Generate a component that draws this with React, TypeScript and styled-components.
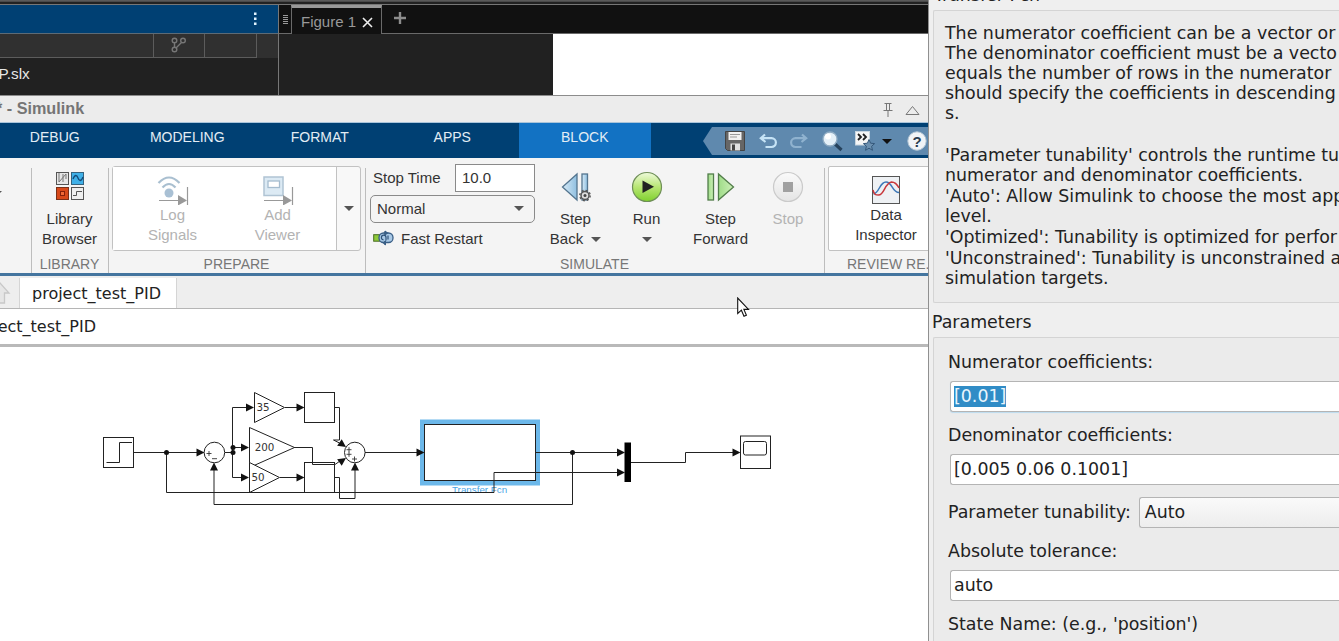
import React from "react";
import styled, { createGlobalStyle } from "styled-components";

const GlobalStyle = createGlobalStyle`
  * { box-sizing: border-box; }
  body {
    margin: 0;
    overflow: hidden;
    background: #fff;
    font-family: "Liberation Sans", Arial, sans-serif;
    font-size: 15px;
    color: #333;
  }
  svg { display: block; flex: none; }
`;

const Screen = styled.div`
  display: flex;
  width: 1339px;
  height: 641px;
  overflow: hidden;
`;

const Desktop = styled.div`
  display: flex;
  flex-direction: column;
  width: 928px;
  flex: none;
  overflow: hidden;
`;

/* MATLAB desktop */

const TopEdge = styled.div`
  height: 5px;
  flex: none;
  background: linear-gradient(#5a5a5a 0 1px, #4a4a4a 1px 2px, #222 2px 4px, #777 4px 5px);
`;

const DesktopBody = styled.div`
  display: flex;
  height: 90px;
  flex: none;
`;

const FilesPanel = styled.div`
  width: 279px;
  border-right: 1px solid #777;
  background: #212121;
`;

const PanelHeader = styled.div`
  display: flex;
  justify-content: flex-end;
  height: 29px;
  padding: 6px 20px 0 0;
  background: #004073;
  border-bottom: 1px solid #5d6b76;
`;

const ColumnHeads = styled.div`
  display: flex;
  height: 24px;
  background: #303030;
`;

const ColumnHead = styled.div<{ $w: number }>`
  display: flex;
  align-items: center;
  justify-content: center;
  width: ${(p) => p.$w}px;
  border-right: 1px solid #5c5c5c;
  border-bottom: 1px solid #5c5c5c;
`;

const FileName = styled.div`
  margin: 7px 0 0 -1.5px;
  line-height: 18px;
  font-size: 15.3px;
  color: #e6e6e6;
`;

const FigurePanel = styled.div`
  flex: 1;
  display: flex;
  flex-direction: column;
`;

const FigureTabs = styled.div`
  display: flex;
  height: 29px;
  flex: none;
  background: #111;
`;

const Grip = styled.div`
  display: flex;
  flex-direction: column;
  align-items: center;
  gap: 1px;
  width: 12px;
  padding-top: 10px;
  border-bottom: 1px solid #6a6a6a;
  span { width: 5px; height: 1px; background: #999; }
`;

const FigureTab = styled.div`
  display: flex;
  align-items: center;
  gap: 6px;
  width: 91px;
  padding: 0 0 0 9px;
  border: 1px solid #6a6a6a;
  border-top: 3px solid #999;
  border-bottom: 0;
  color: #999;
  white-space: nowrap;
  svg { margin-top: 2px; }
`;

const TabFill = styled.div`
  flex: 1;
  padding: 7px 0 0 12px;
  border-bottom: 1px solid #6a6a6a;
`;

const FigureBody = styled.div`
  display: flex;
  flex: 1;
  background: linear-gradient(90deg, #212121 274px, #fff 274px);
`;

/* Simulink window */

const TitleBar = styled.div`
  display: flex;
  align-items: center;
  height: 28px;
  flex: none;
  padding: 0 8px 1px 0;
  border-top: 1px solid #8c8c8c;
  border-bottom: 1px solid #a9c4da;
  background: #ececec;
`;

const Title = styled.div`
  flex: 1;
  margin-left: -4px;
  font-weight: bold;
  font-size: 16.2px;
  white-space: pre;
  color: #757575;
`;

const TitleIcons = styled.div`
  display: flex;
  align-items: center;
  gap: 12px;
  padding-top: 3px;
`;

const RibbonTabs = styled.div`
  display: flex;
  height: 35px;
  flex: none;
  background: #004073;
`;

const TabRun = styled.div`
  display: flex;
  justify-content: flex-end;
  width: 651px;
  overflow: hidden;
`;

const RibbonTab = styled.div<{ $active?: boolean }>`
  flex: none;
  width: 132.5px;
  padding-top: 6px;
  line-height: 17px;
  font-size: 14px;
  text-align: center;
  color: #e3edf5;
  background: ${(p) => (p.$active ? "#1272c3" : "transparent")};
`;

const QuickAccess = styled.div`
  display: flex;
  align-items: center;
  height: 28px;
  flex: 1;
  margin: 4px 0 0 52px;
  padding-left: 22px;
  background: #5f89ae;
  clip-path: polygon(0 50%, 9px 0, 100% 0, 100% 100%, 9px 100%);
`;

const QuickSlot = styled.div<{ $w: number; $drop?: number }>`
  display: flex;
  flex: none;
  width: ${(p) => p.$w}px;
  padding-top: ${(p) => p.$drop ?? 0}px;
`;

const Ribbon = styled.div`
  display: flex;
  height: 115px;
  flex: none;
  background: #f4f4f4;
`;

const Section = styled.div<{ $w: number }>`
  display: flex;
  flex-direction: column;
  flex: none;
  width: ${(p) => p.$w}px;
  background: linear-gradient(#bdbdbd, #bdbdbd) right 10px / 1px 105px no-repeat;
`;

const SectionBody = styled.div<{ $pad?: string }>`
  display: flex;
  height: 97px;
  flex: none;
  padding: ${(p) => p.$pad ?? "0"};
`;

const Caption = styled.div<{ $left?: number }>`
  line-height: 19px;
  font-size: 14px;
  padding-left: ${(p) => p.$left ?? 0}px;
  padding-right: ${(p) => (p.$left ? 0 : 2)}px;
  text-align: ${(p) => (p.$left ? "left" : "center")};
  white-space: nowrap;
  color: #777;
`;

const EdgeCaret = styled.div`
  margin: 33px 0 0 -6px;
`;

const ToolButton = styled.div<{ $w: number; $dim?: boolean; $gap?: number }>`
  display: flex;
  flex-direction: column;
  align-items: center;
  gap: ${(p) => p.$gap ?? 6}px;
  width: ${(p) => p.$w}px;
  flex: none;
  line-height: 20px;
  text-align: center;
  color: ${(p) => (p.$dim ? "#b3b3b3" : "#333")};
`;

const LabelRow = styled.div`
  display: flex;
  align-items: center;
  justify-content: center;
  gap: 8px;
  height: 20px;
  white-space: nowrap;
`;

const Gallery = styled.div`
  display: flex;
  width: 249px;
  height: 85px;
  border: 1px solid #c2c2c2;
  border-radius: 3px;
  background: #f8f8f8;
`;

const GalleryItems = styled.div<{ $w: number }>`
  display: flex;
  width: ${(p) => p.$w}px;
  padding: 6px 0 0 7px;
  border-right: 1px solid #c2c2c2;
  background: #fff;
`;

const GalleryMore = styled.div`
  display: flex;
  flex: 1;
  align-items: center;
  justify-content: center;
`;

const Settings = styled.div`
  width: 165px;
  flex: none;
`;

const StopTime = styled.div`
  display: flex;
  justify-content: space-between;
  height: 28px;
  padding-left: 3px;
  line-height: 27px;
`;

const TimeField = styled.div`
  width: 80px;
  height: 28px;
  padding: 0 6px;
  line-height: 26px;
  border: 1px solid #8a8a8a;
  background: #fff;
`;

const ModeSelect = styled.div`
  display: flex;
  align-items: center;
  justify-content: space-between;
  height: 28px;
  margin-top: 3px;
  padding: 0 10px 1px 6px;
  border: 1px solid #8a8a8a;
  border-radius: 5px;
`;

const FastRestart = styled.div`
  display: flex;
  align-items: center;
  gap: 7px;
  height: 20px;
  margin-top: 5px;
  padding-left: 3px;
`;

const InspectorPanel = styled.div`
  width: 117px;
  height: 85px;
  flex: none;
  padding-top: 6px;
  border: 1px solid #c2c2c2;
  border-radius: 2px;
  background: #fff;
`;

const RibbonEdge = styled.div`
  height: 3px;
  flex: none;
  background: #44759f;
`;

const DocTabs = styled.div`
  display: flex;
  height: 33px;
  flex: none;
  background: #eee;
  border-bottom: 1px solid #b5b5b5;
`;

const UpArrow = styled.div`
  width: 19px;
  padding-top: 3px;
  overflow: hidden;
`;

const DocTab = styled.div`
  width: 158px;
  margin-top: 2px;
  padding-left: 12px;
  line-height: 31px;
  font-family: "DejaVu Sans", sans-serif;
  font-size: 16px;
  color: #222;
  border: 1px solid #d5d5d5;
  border-top: 0;
  border-bottom: 0;
  background: #fff;
`;

const PathBar = styled.div`
  display: flex;
  height: 38px;
  flex: none;
  line-height: 35px;
  font-family: "DejaVu Sans", sans-serif;
  font-size: 16px;
  color: #222;
  border-bottom: 3px solid #b9b9b9;
  background: #fff;
`;

const PathText = styled.div`
  width: 96px;
  display: flex;
  justify-content: flex-end;
  overflow: hidden;
`;

const Canvas = styled.div`
  height: 294px;
  background: #fff;
`;

const Pointer = styled.div`
  position: absolute;
  left: 737px;
  top: 297px;
`;

/* Block parameters dialog */

const Dialog = styled.div`
  display: flex;
  flex-direction: column;
  width: 411px;
  flex: none;
  height: 641px;
  overflow: hidden;
  border-left: 1px solid #909090;
  background: #efefef;
  font-family: "DejaVu Sans", sans-serif;
  font-size: 17.4px;
  line-height: 20px;
  color: #222;
  white-space: nowrap;
`;

const Heading = styled.div<{ $h: number; $top: number; $left: number }>`
  height: ${(p) => p.$h}px;
  flex: none;
  display: flex;
  padding-left: ${(p) => p.$left}px;
  div { margin-top: ${(p) => p.$top}px; }
`;

const Frame = styled.div<{ $h: number; $pad: string }>`
  height: ${(p) => p.$h}px;
  flex: none;
  margin-left: 4px;
  padding: ${(p) => p.$pad};
  border: 1px solid #d4d4d4;
  border-right: 0;
  border-radius: 2px 0 0 2px;
  background: #ebebeb;
  overflow: hidden;
`;

const Para = styled.div<{ $after?: number }>`
  margin-bottom: ${(p) => p.$after ?? 1}px;
`;

const FieldLabel = styled.div`
  height: 20px;
`;

const Field = styled.div<{ $focus?: boolean; $after?: number }>`
  display: flex;
  align-items: center;
  height: 31px;
  margin: 9px 0 ${(p) => p.$after ?? 13}px 2px;
  padding: 0 0 ${(p) => (p.$focus ? 0 : 2)}px 3px;
  border: 1px solid #b4b4b4;
  border-right: 0;
  border-radius: 3px 0 0 3px;
  background: #fff;
  box-shadow: ${(p) => (p.$focus ? "0 1px 1px #bcdcf0" : "none")};
`;

const Selected = styled.span`
  height: 21px;
  line-height: 20px;
  background: #308cc6;
  color: #e9f5fd;
`;

const ComboRow = styled.div`
  display: flex;
  gap: 8px;
  height: 31px;
  margin-bottom: 13px;
  line-height: 30px;
`;

const Combo = styled.div`
  flex: 1;
  height: 31px;
  padding-left: 5px;
  line-height: 28px;
  border: 1px solid #b4b4b4;
  border-right: 0;
  border-radius: 3px 0 0 3px;
  background: linear-gradient(#fafafa, #ededed);
`;

const Caret = ({ color = "#555", w = 10 }: { color?: string; w?: number }) => (
  <svg width={w} height={w / 2} viewBox="0 0 10 5"><path d="M0 0h10L5 5z" fill={color} /></svg>
);

const LibraryIcon = () => (
  <svg width="32" height="32" viewBox="0 0 32 32">
    <rect x="2.5" y="1.5" width="12" height="12" fill="#e6e6e6" stroke="#555" />
    <path d="M5 2v9M9 3v8M5 11l7-8M12 3v5" stroke="#777" fill="none" />
    <rect x="17.5" y="1.5" width="12" height="12" fill="#3fb0e8" stroke="#35637f" />
    <path d="M19 8c2-5 4-4 5-1s3 4 5-1" stroke="#124a78" fill="none" strokeWidth="1.3" />
    <rect x="2.5" y="16.5" width="12" height="12" fill="#d8491a" stroke="#7a3018" />
    <rect x="6.5" y="20.5" width="4" height="4" fill="#f06a38" stroke="#85200a" />
    <rect x="17.5" y="16.5" width="12" height="12" fill="#efefef" stroke="#555" />
    <path d="M19 24.5h3.5v-4H28" stroke="#555" fill="none" />
  </svg>
);

const SignalArrow = () => (
  <g stroke="#999" fill="#999">
    <path d="M2 27.500h26M30.500 14v18" fill="none" strokeWidth="1.200" />
    <path d="M21 22v10.500l9-5z" stroke="none" />
  </g>
);

const LogIcon = () => (
  <svg width="32" height="32" viewBox="0 0 32 32">
    <g fill="none" stroke="#a9bfd0" strokeWidth="2.200">
      <path d="M1.500 10Q12 -1 22.500 10" />
      <path d="M5.500 14.500Q12 7.500 18.500 14.500" />
    </g>
    <circle cx="12" cy="20" r="4.500" fill="#a9c0d4" />
    <SignalArrow />
  </svg>
);

const ViewerIcon = () => (
  <svg width="32" height="32" viewBox="0 0 32 32">
    <rect x="2" y="4" width="19" height="18.500" fill="#dceaf4" stroke="#b0c4d4" strokeWidth="1.500" />
    <rect x="6" y="8" width="11.500" height="6.500" fill="#fff" stroke="#a5bccf" strokeWidth="1.300" />
    <SignalArrow />
  </svg>
);

const StepBackIcon = () => (
  <svg width="32" height="32" viewBox="0 0 32 32">
    <defs>
      <linearGradient id="sb" x1="0" x2="1"><stop offset="0" stopColor="#d8ebf7" /><stop offset="1" stopColor="#8fbfe0" /></linearGradient>
    </defs>
    <path d="M17 3v26L2.500 16z" fill="url(#sb)" stroke="#54758f" strokeWidth="1.300" />
    <rect x="22" y="3" width="5.500" height="26" fill="url(#sb)" stroke="#54758f" strokeWidth="1.300" />
    <circle cx="25" cy="24.500" r="4" fill="#ddd" stroke="#555" strokeWidth="1.500" />
    <circle cx="25" cy="24.500" r="5.200" fill="none" stroke="#555" strokeWidth="1.400" strokeDasharray="2 2.080" />
    <circle cx="25" cy="24.500" r="1.500" fill="#444" />
  </svg>
);

const RunIcon = () => (
  <svg width="32" height="32" viewBox="0 0 32 32">
    <defs>
      <linearGradient id="rn" x1="0" x2="0" y1="0" y2="1"><stop offset="0" stopColor="#eefadb" /><stop offset="0.500" stopColor="#b8e674" /><stop offset="1" stopColor="#7fd02e" /></linearGradient>
    </defs>
    <circle cx="16" cy="16" r="14.500" fill="url(#rn)" stroke="#6f8f58" strokeWidth="1.200" />
    <path d="M11.500 9.500v12.500l11.500-6.250z" fill="#222" />
  </svg>
);

const StepForwardIcon = () => (
  <svg width="32" height="32" viewBox="0 0 32 32">
    <defs>
      <linearGradient id="sf" x1="0" x2="1"><stop offset="0" stopColor="#9fdc88" /><stop offset="1" stopColor="#cdf0b8" /></linearGradient>
    </defs>
    <rect x="3" y="3" width="5.500" height="26" fill="url(#sf)" stroke="#527d4a" strokeWidth="1.300" />
    <path d="M13.500 3v26L28.500 16z" fill="url(#sf)" stroke="#527d4a" strokeWidth="1.300" />
  </svg>
);

const StopIcon = () => (
  <svg width="32" height="32" viewBox="0 0 32 32">
    <defs>
      <linearGradient id="st" x1="0" x2="0" y1="0" y2="1"><stop offset="0" stopColor="#fafafa" /><stop offset="1" stopColor="#e4e4e4" /></linearGradient>
    </defs>
    <circle cx="16" cy="16" r="14.500" fill="url(#st)" stroke="#cacaca" strokeWidth="1.200" />
    <rect x="11" y="11" width="10" height="10" fill="#a0a0a0" />
  </svg>
);

const InspectorIcon = () => (
  <svg width="32" height="32" viewBox="0 0 32 32">
    <rect x="2.500" y="3.500" width="27" height="27" fill="#eef1f4" stroke="#555" />
    <path d="M3.500 21c6-1 6-12 12.500-12s6 10.500 13 10.500" fill="none" stroke="#3e78b8" strokeWidth="1.500" />
    <path d="M3 17c1 5 3 5 5.500 5 6 0 6-12 13-13 4 0 6 3 7.500 6" fill="none" stroke="#c8383c" strokeWidth="1.500" />
  </svg>
);

const RestartIcon = () => (
  <svg width="21" height="16" viewBox="0 0 21 16">
    <rect x="0.700" y="4.700" width="6" height="6.500" fill="#8fcb3a" stroke="#486c20" />
    <rect x="6" y="3" width="14" height="9.500" rx="4.500" fill="#a9c9e6" stroke="#3a5f86" strokeWidth="1.300" />
    <path d="M10.500 9.800a2.300 2.300 0 1 1 2.500-2.300v3M15 5.500v4M12 1v4M12 11v4" fill="none" stroke="#2f5378" strokeWidth="1.200" />
    <path d="M12 0.500l3.500 2.500L12 5.500zM13 10v5.500L9.500 13z" fill="#3a5f86" />
  </svg>
);

const SaveIcon = () => (
  <svg width="20" height="20" viewBox="0 0 20 20">
    <path d="M0.500 0.500h19v19h-17l-2-2z" fill="#666" stroke="#444" />
    <rect x="3.500" y="1" width="13" height="8" fill="#f2f2f2" />
    <path d="M5 3.500h10M5 6h7" stroke="#999" />
    <rect x="5.500" y="12.500" width="9.500" height="7" fill="#e0e0e0" />
    <rect x="7" y="13.500" width="3" height="6" fill="#444" />
  </svg>
);

const UndoIcon = ({ flip }: { flip?: boolean }) => (
  <svg width="18" height="18" viewBox="0 0 18 18">
    <g transform={flip ? "translate(18 0) scale(-1 1)" : undefined} fill="none" stroke={flip ? "#8fb2cf" : "#c5e3f6"} strokeWidth="2.200">
      <path d="M6 1.500L1.800 5.200L6.500 9M2 5.200h10.500a3.900 3.900 0 0 1 0 8.800H6.500" />
    </g>
  </svg>
);

const SearchIcon = () => (
  <svg width="21" height="21" viewBox="0 0 21 21">
    <path d="M12 12l7.500 7" stroke="#26425c" strokeWidth="3.200" />
    <circle cx="8" cy="8" r="7" fill="#e4f0f8" stroke="#8eabc3" strokeWidth="1.300" />
    <circle cx="6" cy="5.500" r="3" fill="#fff" />
  </svg>
);

const FavoritesIcon = () => (
  <svg width="21" height="20" viewBox="0 0 21 20">
    <rect x="0.500" y="0.500" width="14" height="13.500" fill="#f6f6f6" stroke="#c9d6e0" />
    <path d="M3 3l3 3l-3 3M8 3l3 3l-3 3" fill="none" stroke="#222" strokeWidth="1.800" />
    <path d="M14 8.500l1.600 3.700 4 .4-3 2.700.9 4-3.500-2.100-3.500 2.100.9-4-3-2.700 4-.4z" fill="#6c90b0" stroke="#35587a" />
  </svg>
);

const HelpIcon = () => (
  <svg width="20" height="20" viewBox="0 0 20 20">
    <circle cx="10" cy="10" r="9.200" fill="#f1f4f7" stroke="#b5c6d4" />
    <text x="10" y="15.500" textAnchor="middle" fontFamily="Liberation Sans" fontWeight="bold" fontSize="15" fill="#2b3d50">?</text>
  </svg>
);

type Pt = [number, number];

const SignalHead = ({ at, turn = 0 }: { at: Pt; turn?: number }) => (
  <path d="M0 0L-8 -4V4z" fill="#111" transform={`translate(${at[0]} ${at[1]}) rotate(${turn})`} />
);

const Diagram = () => (
  <svg width="928" height="294" viewBox="0 347 928 294" fontFamily="DejaVu Sans">
    <rect x="422.500" y="422" width="115" height="61" fill="#fff" stroke="#6cb8ea" strokeWidth="5" />
    <text x="452" y="493" fontFamily="Liberation Sans" fontSize="9.800" fill="#4aa6e6">Transfer Fcn</text>
    <g fill="#fff" stroke="#222">
      <rect x="103.500" y="437.500" width="30" height="30" />
      <path d="M106.500 462.500h13v-20h12.500" fill="none" />
      <circle cx="214.400" cy="452.500" r="10.300" />
      <path d="M254.500 392.500v30l30-15z" />
      <path d="M249.500 427.500v40l45-20z" />
      <path d="M249.500 462.500v30l30-15z" />
      <rect x="304.500" y="392.500" width="30" height="30" />
      <rect x="304.500" y="462.500" width="30" height="30" />
      <circle cx="354.800" cy="452.500" r="10.300" />
      <rect x="424.500" y="424.500" width="111" height="56" />
      <rect x="740.500" y="436" width="30" height="32.500" />
      <rect x="743.500" y="441.500" width="23" height="13.500" rx="2" />
    </g>
    <g fill="none" stroke="#222">
      <path d="M134 452.500h66M166.500 452.500v40h327.500v-20h126" />
      <path d="M225 452.500h8M248 407.500h-15.500v70h12M233 447.500h10M240 407.500h8" />
      <path d="M285 407.500h14M280 477.500h18" />
      <path d="M335 407.500h4.500v32.500h-6l6 3" />
      <path d="M294 447.500h18.500v17h22.500l5-3.500" />
      <path d="M335 477.500h4.500v21h15.500v-32" />
      <path d="M365 452.500h53M536 452.500h83" />
      <path d="M572.500 452.500v52h-358.500v-38" />
      <path d="M631 462.500h54.500v-10h50" />
    </g>
    <rect x="624.500" y="442.500" width="6.500" height="39.500" fill="#000" />
    <SignalHead at={[204.500, 452.500]} />
    <SignalHead at={[254, 407.500]} />
    <SignalHead at={[249, 447.500]} />
    <SignalHead at={[249, 477.500]} />
    <SignalHead at={[304.500, 407.500]} />
    <SignalHead at={[304.500, 477.500]} />
    <SignalHead at={[346, 447]} turn={35} />
    <SignalHead at={[346, 458]} turn={-35} />
    <SignalHead at={[355, 462.500]} turn={-90} />
    <SignalHead at={[214, 462.500]} turn={-90} />
    <SignalHead at={[424.500, 452.500]} />
    <SignalHead at={[625, 452.500]} />
    <SignalHead at={[625, 472.500]} />
    <SignalHead at={[740.500, 452.500]} />
    <circle cx="166.500" cy="452.500" r="2.500" fill="#111" />
    <circle cx="233" cy="447.500" r="2.500" fill="#111" />
    <circle cx="233" cy="452.500" r="2.500" fill="#111" />
    <circle cx="572.500" cy="452.500" r="2.500" fill="#111" />
    <g stroke="#333" strokeWidth="0.900">
      <path d="M206.500 453.500h5M209 451v5M212 458.700h5" />
      <path d="M346.500 449.700h5M349 447.200v5M346.500 454.300h5M349 451.800v5M352 459h5M354.500 456.500v5" />
    </g>
    <g fontSize="10.300" fill="#333">
      <text x="256.500" y="411">35</text>
      <text x="254.700" y="451">200</text>
      <text x="251.500" y="481">50</text>
    </g>
  </svg>
);

export default function App() {
  return (
    <Screen>
      <GlobalStyle />
      <Desktop>
        <TopEdge />
        <DesktopBody>
          <FilesPanel>
            <PanelHeader>
              <svg width="6" height="16" viewBox="0 0 6 16" fill="#dff3ff">
                <rect x="2" y="1.500" width="2.500" height="2.500" /><rect x="2" y="6.500" width="2.500" height="2.500" /><rect x="2" y="11.500" width="2.500" height="2.500" />
              </svg>
            </PanelHeader>
            <ColumnHeads>
              <ColumnHead $w={154} />
              <ColumnHead $w={51}>
                <svg width="16" height="17" viewBox="0 0 16 17" fill="none" stroke="#777" strokeWidth="1.400">
                  <circle cx="3.500" cy="3.500" r="2.300" /><circle cx="12" cy="3.500" r="2.300" /><circle cx="3.500" cy="12.500" r="2.300" />
                  <path d="M3.500 6v4M10.500 5.500L5 11" />
                </svg>
              </ColumnHead>
              <ColumnHead $w={52} />
            </ColumnHeads>
            <FileName>P.slx</FileName>
          </FilesPanel>
          <FigurePanel>
            <FigureTabs>
              <Grip><span /><span /><span /><span /><span /></Grip>
              <FigureTab>
                Figure 1
                <svg width="11" height="11" viewBox="0 0 11 11"><path d="M1 1l9 9M10 1l-9 9" stroke="#eee" strokeWidth="1.600" /></svg>
              </FigureTab>
              <TabFill>
                <svg width="12" height="12" viewBox="0 0 12 12"><path d="M6 0v12M0 6h12" stroke="#8c8c8c" strokeWidth="2.400" /></svg>
              </TabFill>
            </FigureTabs>
            <FigureBody />
          </FigurePanel>
        </DesktopBody>

        <TitleBar>
          <Title>* - Simulink</Title>
          <TitleIcons>
            <svg width="10" height="14" viewBox="0 0 10 14" fill="none" stroke="#777"><path d="M1.500 0.500h7M3.500 0.500v7M6.500 0.500v7M0.500 7.500h9M5 7.500V14" /></svg>
            <svg width="15" height="11" viewBox="0 0 15 11" fill="none" stroke="#777"><path d="M1 9.500h13L7.500 1.500z" /></svg>
          </TitleIcons>
        </TitleBar>

        <RibbonTabs>
          <TabRun>
            <RibbonTab>DEBUG</RibbonTab>
            <RibbonTab>MODELING</RibbonTab>
            <RibbonTab>FORMAT</RibbonTab>
            <RibbonTab>APPS</RibbonTab>
            <RibbonTab $active>BLOCK</RibbonTab>
          </TabRun>
          <QuickAccess>
            <QuickSlot $w={34}><SaveIcon /></QuickSlot>
            <QuickSlot $w={31} $drop={2}><UndoIcon /></QuickSlot>
            <QuickSlot $w={32} $drop={2}><UndoIcon flip /></QuickSlot>
            <QuickSlot $w={33}><SearchIcon /></QuickSlot>
            <QuickSlot $w={27}><FavoritesIcon /></QuickSlot>
            <QuickSlot $w={25}><Caret color="#111" /></QuickSlot>
            <HelpIcon />
          </QuickAccess>
        </RibbonTabs>

        <Ribbon>
          <Section $w={32}><EdgeCaret><Caret w={8} /></EdgeCaret></Section>
          <Section $w={77}>
            <SectionBody $pad="13px 0 0 0">
              <ToolButton $w={75}>
                <LibraryIcon />
                <div>Library<br />Browser</div>
              </ToolButton>
            </SectionBody>
            <Caption>LIBRARY</Caption>
          </Section>
          <Section $w={257}>
            <SectionBody $pad="8px 0 0 3px">
              <Gallery>
                <GalleryItems $w={224}>
                  <ToolButton $w={105} $dim $gap={-1}><LogIcon /><div>Log<br />Signals</div></ToolButton>
                  <ToolButton $w={105} $dim $gap={-1}><ViewerIcon /><div>Add<br />Viewer</div></ToolButton>
                </GalleryItems>
                <GalleryMore><Caret /></GalleryMore>
              </Gallery>
            </SectionBody>
            <Caption>PREPARE</Caption>
          </Section>
          <Section $w={459}>
            <SectionBody $pad="6px 0 0 4px">
              <Settings>
                <StopTime>Stop Time<TimeField>10.0</TimeField></StopTime>
                <ModeSelect>Normal<Caret /></ModeSelect>
                <FastRestart><RestartIcon />Fast Restart</FastRestart>
              </Settings>
              <SectionBody $pad="7px 0 0 5px">
                <ToolButton $w={71}>
                  <StepBackIcon />
                  <div>Step<LabelRow>Back <Caret /></LabelRow></div>
                </ToolButton>
                <ToolButton $w={71}>
                  <RunIcon />
                  <div>Run<LabelRow><Caret /></LabelRow></div>
                </ToolButton>
                <ToolButton $w={77}>
                  <StepForwardIcon />
                  <div>Step<br />Forward</div>
                </ToolButton>
                <ToolButton $w={58} $dim>
                  <StopIcon />
                  <div>Stop</div>
                </ToolButton>
              </SectionBody>
            </SectionBody>
            <Caption>SIMULATE</Caption>
          </Section>
          <Section $w={126}>
            <SectionBody $pad="8px 0 0 3px">
              <InspectorPanel>
                <ToolButton $w={114} $gap={-1}><InspectorIcon /><div>Data<br />Inspector</div></ToolButton>
              </InspectorPanel>
            </SectionBody>
            <Caption $left={22}>REVIEW RE...</Caption>
          </Section>
        </Ribbon>
        <RibbonEdge />

        <DocTabs>
          <UpArrow>
            <svg width="12" height="26" viewBox="0 0 12 26"><path d="M-8 14L0 4l9 10H4.500v10h-10" fill="#e6e6e6" stroke="#c8c8c8" strokeWidth="1.300" /></svg>
          </UpArrow>
          <DocTab>project_test_PID</DocTab>
        </DocTabs>
        <PathBar><PathText><span>ect_test_PID</span></PathText></PathBar>
        <Canvas><Diagram /></Canvas>
      </Desktop>

      <Dialog>
        <Heading $h={10} $top={-15} $left={5}><div>Transfer Fcn</div></Heading>
        <Frame $h={293} $pad="12px 0 0 11px">
          <Para $after={22}>
            The numerator coefficient can be a vector or<br />
            The denominator coefficient must be a vecto<br />
            equals the number of rows in the numerator<br />
            should specify the coefficients in descending<br />
            s.
          </Para>
          <Para>
            'Parameter tunability' controls the runtime tu<br />
            numerator and denominator coefficients.
          </Para>
          <Para>'Auto': Allow Simulink to choose the most app<br />level.</Para>
          <Para>'Optimized': Tunability is optimized for perfor</Para>
          <Para>'Unconstrained': Tunability is unconstrained a<br />simulation targets.</Para>
        </Frame>
        <Heading $h={34} $top={9} $left={3}><div>Parameters</div></Heading>
        <Frame $h={306} $pad="14px 0 0 14px">
          <FieldLabel>Numerator coefficients:</FieldLabel>
          <Field $focus><Selected>[0.01]</Selected></Field>
          <FieldLabel>Denominator coefficients:</FieldLabel>
          <Field $after={12}>[0.005 0.06 0.1001]</Field>
          <ComboRow>Parameter tunability:<Combo>Auto</Combo></ComboRow>
          <FieldLabel>Absolute tolerance:</FieldLabel>
          <Field>auto</Field>
          <FieldLabel>State Name: (e.g., 'position')</FieldLabel>
        </Frame>
      </Dialog>

      <Pointer>
        <svg width="13" height="21" viewBox="0 0 13 21"><path d="M0.700 1v15.500l3.700-3.300 2.600 6 2.400-1-2.500-5.800h4.600z" fill="#fff" stroke="#111" strokeWidth="1.100" /></svg>
      </Pointer>
    </Screen>
  );
}
